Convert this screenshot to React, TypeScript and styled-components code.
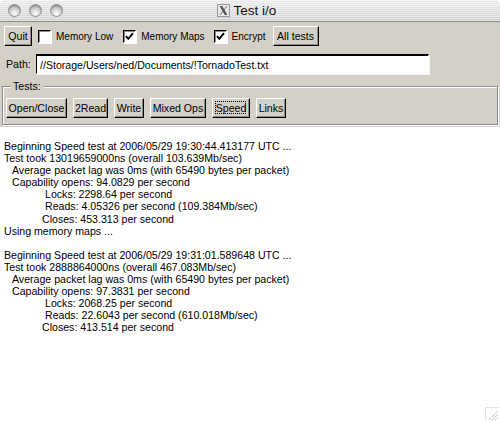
import React from "react";
import styled, { createGlobalStyle } from "styled-components";

const GlobalStyle = createGlobalStyle`
  html, body { margin: 0; padding: 0; background: #ffffff; }
  body { font-family: "Liberation Sans", Arial, sans-serif; }
  * { box-sizing: border-box; }
`;

const Window = styled.div`
  width: 500px;
  height: 422px;
  display: flex;
  flex-direction: column;
  background: #d4d0c8;
  border-radius: 6px 6px 0 0;
  overflow: hidden;
  position: relative;
`;

const TitleBar = styled.div`
  height: 22px;
  flex: none;
  display: grid;
  grid-template-columns: 1fr auto 1fr;
  align-items: center;
  border-bottom: 1px solid #8c8c8c;
  background:
    repeating-linear-gradient(180deg, rgba(255,255,255,0.35) 0 1px, rgba(0,0,0,0.015) 1px 2px),
    linear-gradient(180deg, #efefef 0%, #e2e2e2 50%, #d3d3d3 100%);
`;

const Lights = styled.div`
  display: flex;
  gap: 8px;
  padding-left: 8px;
`;

const Light = styled.span`
  width: 13px;
  height: 13px;
  border-radius: 50%;
  border: 1px solid #8e8e8e;
  background: radial-gradient(circle at 50% 78%, #ffffff 0%, #dedede 35%, #b9b9b9 70%, #9d9d9d 100%);
  box-shadow: inset 0 1px 1px rgba(0,0,0,0.25);
`;

const TitleGroup = styled.div`
  display: flex;
  align-items: center;
  gap: 4px;
  padding-right: 7px;
`;

const TitleText = styled.span`
  font-family: "Liberation Sans", Arial, sans-serif;
  font-size: 13.5px;
  color: #111;
`;

const Row = styled.div<{ $top: number }>`
  display: flex;
  align-items: center;
  height: 20px;
  margin-top: ${(p) => p.$top}px;
  padding-left: 4px;
  flex: none;
`;

const Button = styled.button<{ $w: number; $focused?: boolean; $ml?: number }>`
  width: ${(p) => p.$w}px;
  height: 20px;
  margin: 0 0 0 ${(p) => p.$ml ?? 0}px;
  padding: 0;
  display: flex;
  align-items: center;
  justify-content: center;
  position: relative;
  font-family: "Liberation Sans", Arial, sans-serif;
  font-size: 10.6px;
  color: #000;
  background: #d4d0c8;
  border: 1px solid;
  border-color: #ffffff #000000 #000000 #ffffff;
  box-shadow: inset -1px -1px 0 #8a8a8a;
  outline: none;
  &::after {
    content: "";
    display: ${(p) => (p.$focused ? "block" : "none")};
    position: absolute;
    inset: 2px 3px 3px 2px;
    border: 1px dotted #000;
  }
`;

const CheckItem = styled.label<{ $ml: number }>`
  display: flex;
  align-items: center;
  gap: 5px;
  margin-left: ${(p) => p.$ml}px;
  font-size: 10px;
  color: #000;
`;

const Box = styled.span`
  width: 13px;
  height: 13px;
  display: flex;
  align-items: center;
  justify-content: center;
  background: #fff;
  border-style: solid;
  border-width: 1px;
  border-color: #000 #ffffff #ffffff #000;
  box-shadow: inset 1px 1px 0 #8a8a8a, 1px 1px 0 #ffffff;
`;

const PathLabel = styled.span`
  font-size: 10.6px;
  color: #000;
  margin-left: 2px;
  width: 30px;
`;

const Entry = styled.div`
  width: 393px;
  height: 20px;
  display: flex;
  align-items: center;
  padding-left: 3px;
  background: #fff;
  border-style: solid;
  border-width: 2px 1px 1px 1px;
  border-color: #000 #ffffff #ffffff #000;
  box-shadow: 1px 1px 0 #f4f4f4;
  font-size: 10.6px;
  color: #000;
  white-space: nowrap;
`;

const Frame = styled.div`
  position: relative;
  margin: 12px 2px 0 2px;
  height: 39px;
  border: 1px solid #8c8c8c;
  box-shadow: inset 1px 1px 0 #ffffff, 1px 1px 0 #ffffff;
  display: flex;
  align-items: flex-start;
  padding: 11px 0 0 3px;
  gap: 6px;
  flex: none;
`;

const Legend = styled.span`
  position: absolute;
  top: -7px;
  left: 8px;
  padding: 0 3px 0 2px;
  background: #d4d0c8;
  font-size: 10.6px;
  color: #000;
`;

const Output = styled.div`
  flex: 1;
  margin-top: 2px;
  background: #ffffff;
  padding: 13px 0 0 4px;
  position: relative;
  font-size: 10.6px;
  line-height: 12.1px;
  color: #000;
`;

const Line = styled.div<{ $indent: number }>`
  white-space: nowrap;
  height: 12.1px;
  padding-left: ${(p) => p.$indent}px;
`;

const Grip = styled.svg`
  position: absolute;
  right: 1px;
  bottom: 1px;
`;

const XIcon = () => (
  <svg width="13" height="13" viewBox="0 0 13 13">
    <rect x="0.5" y="0.5" width="12" height="12" fill="#e8e8e8" stroke="#9a9a9a" />
    <path d="M2.5 2 L5.2 2 L10.5 11 L7.8 11 Z" fill="#555" />
    <path d="M9.6 2 L10.4 2 L3.4 11 L2.6 11 Z" fill="#555" />
  </svg>
);

const Check = () => (
  <svg width="9" height="9" viewBox="0 0 9 9">
    <path d="M1 4.2 L3.3 6.8 L8 1.2" fill="none" stroke="#000" strokeWidth="2" />
  </svg>
);

type L = { t: string; i: number };

const lines: L[] = [
  { t: "Beginning Speed test at 2006/05/29 19:30:44.413177 UTC ...", i: 0 },
  { t: "Test took 13019659000ns (overall 103.639Mb/sec)", i: 0 },
  { t: "Average packet lag was 0ms (with 65490 bytes per packet)", i: 8 },
  { t: "Capability opens: 94.0829 per second", i: 8 },
  { t: "Locks: 2298.64 per second", i: 41 },
  { t: "Reads: 4.05326 per second (109.384Mb/sec)", i: 41 },
  { t: "Closes: 453.313 per second", i: 38 },
  { t: "Using memory maps ...", i: 0 },
  { t: "", i: 0 },
  { t: "Beginning Speed test at 2006/05/29 19:31:01.589648 UTC ...", i: 0 },
  { t: "Test took 2888864000ns (overall 467.083Mb/sec)", i: 0 },
  { t: "Average packet lag was 0ms (with 65490 bytes per packet)", i: 8 },
  { t: "Capability opens: 97.3831 per second", i: 8 },
  { t: "Locks: 2068.25 per second", i: 41 },
  { t: "Reads: 22.6043 per second (610.018Mb/sec)", i: 41 },
  { t: "Closes: 413.514 per second", i: 38 },
];

export default function App() {
  return (
    <>
      <GlobalStyle />
      <Window>
        <TitleBar>
          <Lights>
            <Light />
            <Light />
            <Light />
          </Lights>
          <TitleGroup>
            <XIcon />
            <TitleText>Test i/o</TitleText>
          </TitleGroup>
          <span />
        </TitleBar>

        <Row $top={4}>
          <Button $w={28}>Quit</Button>
          <CheckItem $ml={6}>
            <Box />
            Memory Low
          </CheckItem>
          <CheckItem $ml={10}>
            <Box>
              <Check />
            </Box>
            Memory Maps
          </CheckItem>
          <CheckItem $ml={9}>
            <Box>
              <Check />
            </Box>
            Encrypt
          </CheckItem>
          <Button $w={46} $ml={7}>All tests</Button>
        </Row>

        <Row $top={8}>
          <PathLabel>Path:</PathLabel>
          <Entry>//Storage/Users/ned/Documents/!TornadoTest.txt</Entry>
        </Row>

        <Frame>
          <Legend>Tests:</Legend>
          <Button $w={61}>Open/Close</Button>
          <Button $w={35}>2Read</Button>
          <Button $w={30}>Write</Button>
          <Button $w={56}>Mixed Ops</Button>
          <Button $w={38} $focused>Speed</Button>
          <Button $w={30}>Links</Button>
        </Frame>

        <Output>
          {lines.map((l, k) => (
            <Line key={k} $indent={l.i}>
              {l.t}
            </Line>
          ))}
          <Grip width="14" height="14" viewBox="0 0 14 14">
            <path d="M0.5 14 L0.5 0.5 L14 0.5" fill="none" stroke="#e2e2e2" />
            <path d="M4 13 L13 4" stroke="#9a9a9a" strokeWidth="1" strokeDasharray="1 1" />
            <path d="M7 13 L13 7" stroke="#9a9a9a" strokeWidth="1" strokeDasharray="1 1" />
            <path d="M10 13 L13 10" stroke="#9a9a9a" strokeWidth="1" strokeDasharray="1 1" />
          </Grip>
        </Output>
      </Window>
    </>
  );
}
